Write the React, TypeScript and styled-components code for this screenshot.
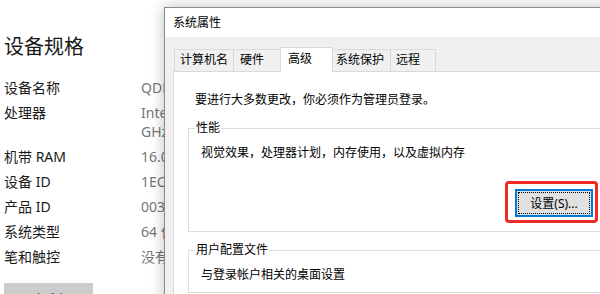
import React from 'react';
import styled, { createGlobalStyle } from 'styled-components';

const UI_FONT = `"Noto Sans", "Noto Sans CJK SC", sans-serif`;

const GlobalStyle = createGlobalStyle`
  html, body {
    margin: 0;
    padding: 0;
    background: #ffffff;
  }

  #root {
    position: relative;
    width: 600px;
    height: 294px;
    overflow: hidden;
  }
`;

/* ---------- settings page behind the dialog ---------- */

const SpecPage = styled.div`
  padding: 33px 0 0 4px;
  font-family: ${UI_FONT};
  color: #1a1a1a;
`;

const Heading = styled.h1`
  margin: 0 0 17px;
  font-size: 20px;
  font-weight: 400;
  line-height: 28px;
`;

const SpecList = styled.dl`
  margin: 0;
  display: grid;
  grid-template-columns: 137px 320px;
  row-gap: 6px;
  font-size: 14px;
  line-height: 19px;
`;

const SpecLabel = styled.dt`
  margin: 0;
`;

const SpecValue = styled.dd`
  margin: 0;
  color: #767676;
  white-space: nowrap;
`;

const CopyButton = styled.button`
  display: block;
  margin-top: 17px;
  width: 89px;
  height: 32px;
  padding: 0;
  border: none;
  background: #cccccc;
  color: #1a1a1a;
  font-family: ${UI_FONT};
  font-size: 14px;
`;

/* ---------- system properties dialog ---------- */

const Window = styled.div`
  position: absolute;
  left: 164px;
  top: 7px;
  width: 480px;
  height: 330px;
  box-sizing: border-box;
  display: flex;
  flex-direction: column;
  background: #f0f0f0;
  border: 1px solid #8a8a8a;
  box-shadow: 0 0 14px rgba(0, 0, 0, 0.26);
  font-family: ${UI_FONT};
  font-size: 12px;
  color: #000000;
`;

const TitleBar = styled.div`
  height: 29px;
  display: flex;
  align-items: center;
  padding-left: 8px;
  background: #ffffff;
  line-height: 16px;
`;

const WindowBody = styled.div`
  flex: 1;
  display: flex;
  flex-direction: column;
  padding: 10px 8px 0;
`;

const TabRow = styled.div`
  position: relative;
  z-index: 1;
  display: flex;
  align-items: flex-end;
  height: 24px;
  padding-left: 1px;
`;

const Tab = styled.div<{ $active?: boolean; $width: number; $indent: number }>`
  box-sizing: border-box;
  width: ${({ $width }) => $width}px;
  height: ${({ $active }) => ($active ? 25 : 22)}px;
  margin-bottom: ${({ $active }) => ($active ? -1 : 0)}px;
  padding-left: ${({ $indent }) => $indent}px;
  border: 1px solid #d9d9d9;
  border-bottom: none;
  background: ${({ $active }) => ($active ? '#ffffff' : '#f0f0f0')};
  line-height: ${({ $active }) => ($active ? 22 : 20)}px;
  white-space: nowrap;

  & + & {
    margin-left: -1px;
  }
`;

const TabPanel = styled.div`
  flex: 1;
  padding: 19px 14px 0;
  background: #ffffff;
  border: 1px solid #d9d9d9;
`;

const Intro = styled.p`
  margin: 0 0 11px 7px;
  line-height: 18px;
`;

const Group = styled.fieldset<{ $gap?: number }>`
  margin: ${({ $gap = 0 }) => $gap}px 0 0;
  padding: 0 21px 8px 12px;
  border: 1px solid #dcdcdc;
  min-width: 0;
`;

const GroupTitle = styled.legend`
  margin-left: -6px;
  padding: 0 1px;
  line-height: 16px;
`;

const GroupText = styled.div`
  margin-top: 8px;
  line-height: 18px;
`;

const ButtonRow = styled.div`
  display: flex;
  justify-content: flex-end;
  margin-top: 19px;
`;

const Highlight = styled.div`
  padding: 5px 2px 3px 7px;
  border: 3px solid #ee2b24;
  border-radius: 4px;
`;

const DialogButton = styled.button`
  position: relative;
  box-sizing: border-box;
  width: 78px;
  height: 28px;
  padding: 0;
  border: 2px solid #0078d7;
  background: #e1e1e1;
  color: #000000;
  font-family: ${UI_FONT};
  font-size: 12px;

  &::after {
    content: '';
    position: absolute;
    inset: 1px;
    border: 1px dotted #000000;
  }
`;

const specs: [string, React.ReactNode][] = [
  ['设备名称', 'QDFZ-PC'],
  [
    '处理器',
    <>
      Intel(R) Core(TM) i7-8700 CPU @ 3.20GHz 3.19
      <br />
      GHz
    </>,
  ],
  ['机带 RAM', '16.0 GB (15.9 GB 可用)'],
  ['设备 ID', '1EC3A6F2-52D4-4E1B-9B0A-7C1D2E3F4A5B'],
  ['产品 ID', '00330-80000-00000-AA000'],
  ['系统类型', '64 位操作系统, 基于 x64 的处理器'],
  ['笔和触控', '没有可用于此显示器的笔或触控输入'],
];

const tabs = [
  { label: '计算机名', width: 60, indent: 5 },
  { label: '硬件', width: 48, indent: 6 },
  { label: '高级', width: 53, indent: 7, active: true },
  { label: '系统保护', width: 59, indent: 3 },
  { label: '远程', width: 46, indent: 5 },
];

export default function App() {
  return (
    <>
      <GlobalStyle />
      <SpecPage>
        <Heading>设备规格</Heading>
        <SpecList>
          {specs.map(([label, value]) => (
            <React.Fragment key={label}>
              <SpecLabel>{label}</SpecLabel>
              <SpecValue>{value}</SpecValue>
            </React.Fragment>
          ))}
        </SpecList>
        <CopyButton>复制</CopyButton>
      </SpecPage>

      <Window>
        <TitleBar>系统属性</TitleBar>
        <WindowBody>
          <TabRow>
            {tabs.map((t) => (
              <Tab key={t.label} $active={t.active} $width={t.width} $indent={t.indent}>
                {t.label}
              </Tab>
            ))}
          </TabRow>
          <TabPanel>
            <Intro>要进行大多数更改，你必须作为管理员登录。</Intro>
            <Group>
              <GroupTitle>性能</GroupTitle>
              <GroupText>视觉效果，处理器计划，内存使用，以及虚拟内存</GroupText>
              <ButtonRow>
                <Highlight>
                  <DialogButton>设置(S)...</DialogButton>
                </Highlight>
              </ButtonRow>
            </Group>
            <Group $gap={10}>
              <GroupTitle>用户配置文件</GroupTitle>
              <GroupText>与登录帐户相关的桌面设置</GroupText>
            </Group>
          </TabPanel>
        </WindowBody>
      </Window>
    </>
  );
}
